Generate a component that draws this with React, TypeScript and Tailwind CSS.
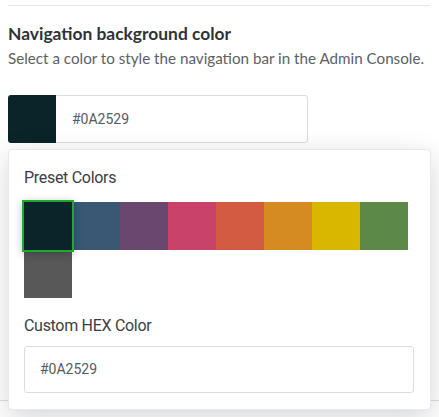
import React from "react";

const presets = [
  "#0A2529",
  "#3A5874",
  "#6A476E",
  "#C8426A",
  "#D35B41",
  "#D58A22",
  "#D9B700",
  "#5C8947",
  "#585858",
];

export default function App() {
  return (
    <div className="relative w-[439px] h-[417px] overflow-hidden bg-white">
      <div className="pl-2 pr-[9px] pt-[5px] font-['Lato',sans-serif]">
        <div className="h-px bg-[#e3e5e8]" />
        <h2 className="mt-[16px] text-[17.4px] leading-[24px] font-bold text-[#2e3338]">
          Navigation background color
        </h2>
        <p className="mt-[1px] text-[15.2px] leading-[22px] text-[#5c6166]">
          Select a color to style the navigation bar in the Admin Console.
        </p>
        <div className="mt-[26px] flex h-[48px] w-[300px]">
          <div className="w-[48px] h-[48px] rounded-l-[3px] bg-[#0A2529]" />
          <div className="flex-1 h-[48px] flex items-center pl-[16px] border border-l-0 border-[#d9dde2] rounded-r-[3px] font-['Roboto',sans-serif] text-[14px] text-[#555a5f]">
            #0A2529
          </div>
        </div>
      </div>

      <div className="absolute left-0 right-0 top-[400px] h-px bg-[#dcdee2]" />

      <div className="absolute left-2 top-[149px] w-[423px] h-[261px] bg-white rounded-[4px] border border-[#e6e8eb] shadow-[0_8px_28px_rgba(20,25,40,0.18)] px-[15px] pt-[17px] font-['Roboto',sans-serif]">
        <div className="text-[16px] leading-[22px] text-[#3a3e44] tracking-[-0.3px]">
          Preset Colors
        </div>
        <div className="mt-[13px] flex flex-wrap w-[384px]">
          {presets.map((c, i) => (
            <div
              key={c}
              className={
                i === 0
                  ? "relative w-[48px] h-[48px] z-10"
                  : "w-[48px] h-[48px]"
              }
              style={{ backgroundColor: c }}
            >
              {i === 0 && (
                <div className="absolute -inset-[2px] border-2 border-[#22a82a] shadow-[0_2px_8px_rgba(0,0,0,0.25)]" />
              )}
            </div>
          ))}
        </div>
        <div className="mt-[17px] text-[16px] leading-[22px] text-[#3a3e44] tracking-[-0.3px]">
          Custom HEX Color
        </div>
        <div className="mt-[9px] h-[47px] w-[390px] flex items-center pl-[15px] border border-[#d9dde2] rounded-[3px] text-[14px] text-[#555a5f]">
          #0A2529
        </div>
      </div>
    </div>
  );
}
